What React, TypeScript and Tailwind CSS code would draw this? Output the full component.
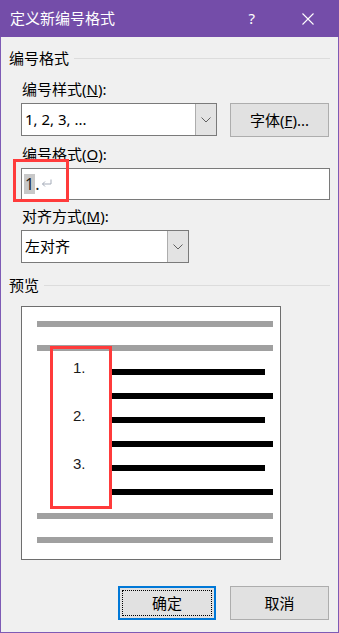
import React from "react";

const font = { fontFamily: '"Noto Sans", "Noto Sans CJK SC", sans-serif' };

function Chevron() {
  return (
    <svg width="10" height="6" viewBox="0 0 10 6" fill="none">
      <path d="M0.5 0.5 L5 5 L9.5 0.5" stroke="#606060" strokeWidth="1" />
    </svg>
  );
}

function Combo({ value, width }: { value: string; width: string }) {
  return (
    <div className={`${width} h-[33px] flex bg-white border border-[#7a7a7a]`}>
      <div className="flex-1 flex items-center pl-[3px] text-[15px] text-black">{value}</div>
      <div className="w-[21px] flex items-center justify-center bg-[#e3e3e3] border-l border-[#adadad]">
        <Chevron />
      </div>
    </div>
  );
}

function GroupHeader({ text }: { text: string }) {
  return (
    <div className="flex items-center h-[18px] pl-[8px] pr-[8px]">
      <span className="text-[15px] leading-[18px] text-black">{text}</span>
      <div className="flex-1 h-px bg-[#dcdcdc] ml-[5px]" />
    </div>
  );
}

function Label({ children }: { children: React.ReactNode }) {
  return <div className="h-[20px] leading-[20px] text-[15px] text-black pl-[21px]">{children}</div>;
}

export default function App() {
  const rows = [
    { num: "1.", short: true },
    { num: "", short: false },
    { num: "2.", short: true },
    { num: "", short: false },
    { num: "3.", short: true },
    { num: "", short: false },
  ];

  return (
    <div
      className="relative w-[339px] h-[633px] bg-[#f0f0f0] border-x border-b border-[#7e5bb5] flex flex-col"
      style={font}
    >
      {/* title bar */}
      <div className="h-[37px] -mx-px bg-[#744da9] flex items-center text-white">
        <span className="pl-[10px] text-[15px] flex-1">定义新编号格式</span>
        <span className="text-[15px] mr-[47px]">?</span>
        <svg width="12" height="12" viewBox="0 0 12 12" className="mr-[25px]">
          <path d="M0.5 0.5 L11.5 11.5 M11.5 0.5 L0.5 11.5" stroke="#fff" strokeWidth="1.1" />
        </svg>
      </div>

      <div className="mt-[12px]">
        <GroupHeader text="编号格式" />
      </div>

      <div className="mt-[12px]">
        <Label>
          编号样式(<span className="underline">N</span>):
        </Label>
      </div>
      <div className="mt-[4px] flex pl-[20px] gap-[13px]">
        <Combo value="1, 2, 3, ..." width="w-[196px]" />
        <div className="w-[99px] h-[34px] bg-[#e1e1e1] border border-[#adadad] flex items-center justify-center text-[15px] text-black">
          字体(<span className="underline">F</span>)...
        </div>
      </div>

      <div className="mt-[7px]">
        <Label>
          编号格式(<span className="underline">O</span>):
        </Label>
      </div>
      <div className="mt-[4px] pl-[20px]">
        <div className="w-[309px] h-[32px] bg-white border border-[#7a7a7a] flex items-center pl-[2px]">
          <span className="bg-[#c8c8c8] text-[16px] leading-[20px] text-[#222] px-px">1</span>
          <span className="text-[16px] leading-[20px] text-[#222]">.</span>
          <svg width="11" height="9" viewBox="0 0 11 9" className="ml-[2px] -mt-[2px]" fill="none">
            <path d="M10 0.5 V5 H1.5 M4 2.5 L1.5 5 L4 7.5" stroke="#a4abb8" strokeWidth="1" />
          </svg>
        </div>
      </div>

      <div className="mt-[6px]">
        <Label>
          对齐方式(<span className="underline">M</span>):
        </Label>
      </div>
      <div className="mt-[4px] pl-[20px]">
        <Combo value="左对齐" width="w-[168px]" />
      </div>

      <div className="mt-[13px]">
        <GroupHeader text="预览" />
      </div>

      {/* preview */}
      <div className="mt-[12px] ml-[20px] w-[260px] bg-white border border-[#6e6e6e] pt-[14px] pb-[16px] pl-[15px] pr-[7px]">
        <div className="h-[6px] bg-[#a0a0a0]" />
        <div className="h-[24px] flex items-end">
          <div className="h-[6px] w-full bg-[#a0a0a0]" />
        </div>
        {rows.map((r, i) => (
          <div key={i} className="h-[24px] flex items-end">
            <div className="w-[74px] pl-[36px] text-[15px] leading-none text-[#1a1a1a]" style={{ fontFamily: '"Liberation Sans", Arial, sans-serif' }}>
              {r.num}
            </div>
            <div className={`h-[6px] bg-black ${r.short ? "w-[154px]" : "w-[162px]"}`} />
          </div>
        ))}
        <div className="h-[24px] flex items-end">
          <div className="h-[6px] w-full bg-[#a0a0a0]" />
        </div>
        <div className="h-[24px] flex items-end">
          <div className="h-[6px] w-full bg-[#a0a0a0]" />
        </div>
      </div>

      {/* buttons */}
      <div className="mt-[26px] flex justify-end gap-[14px] pr-[9px]">
        <div className="w-[98px] h-[34px] bg-[#e1e1e1] border-2 border-[#0078d7] p-[2px]">
          <div className="w-full h-full border border-dotted border-black flex items-center justify-center text-[15px] text-black">
            确定
          </div>
        </div>
        <div className="w-[99px] h-[34px] bg-[#e1e1e1] border border-[#adadad] flex items-center justify-center text-[15px] text-black">
          取消
        </div>
      </div>

      {/* annotation boxes */}
      <div className="absolute left-[12px] top-[159px] w-[56px] h-[43px] border-[3px] border-[#ff3b3b]" />
      <div className="absolute left-[49px] top-[346px] w-[62px] h-[163px] border-[3px] border-[#ff3b3b]" />
    </div>
  );
}
